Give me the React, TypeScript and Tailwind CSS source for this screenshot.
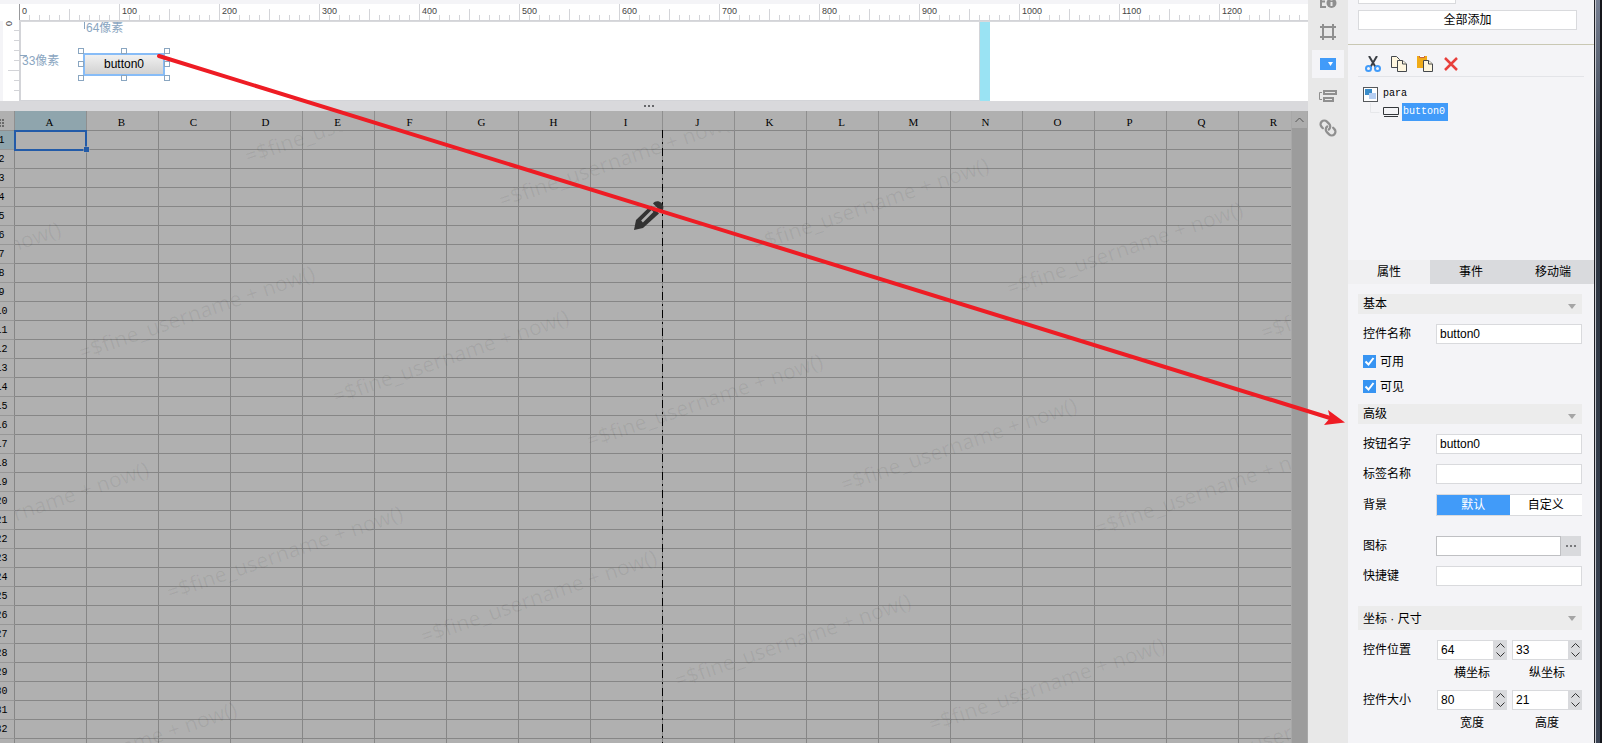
import { ReactNode, useState } from 'react'
import { Link } from 'lucide-react'

const COLUMNS = 'ABCDEFGHIJKLMNOPQR'.split('')
const ROWS = Array.from({ length: 33 }, (_, i) => i + 1)
const RULER_END = 1290
const TICKS = Array.from({ length: RULER_END / 10 }, (_, i) => i * 10)
const WATERMARK = '=$fine_username + now()'

// Watermark origins sit on a slanted lattice
const WATERMARKS = [-2, -1, 0, 1, 2, 3, 4, 5].flatMap((i) =>
  [-2, -1, 0, 1, 2, 3].map((j) => ({
    x: 248 + i * 254 + j * 88,
    y: 53 + i * 44 + j * 240,
  }))
)

function HorizontalRuler() {
  return (
    <svg width={RULER_END} height="17" className="block shrink-0" shapeRendering="crispEdges">
      <rect x="0" y="16" width={RULER_END} height="1" fill="#d3d4d8" />
      {TICKS.map((t) => {
        const top = t % 100 === 0 ? 0 : t % 50 === 0 ? 5 : 11
        return (
          <g key={t}>
            <rect x={t} y={top} width="1" height={16 - top} fill={t === 0 ? '#98999c' : '#d3d4d8'} />
            {t % 100 === 0 && (
              <text x={t + 3} y="10" fontSize="9" fill="#444" fontFamily="'Liberation Sans', sans-serif">
                {t}
              </text>
            )}
          </g>
        )
      })}
    </svg>
  )
}

function VerticalRuler() {
  return (
    <svg width="17" height="80" className="block shrink-0 bg-white" shapeRendering="crispEdges">
      <rect x="16" y="0" width="1" height="80" fill="#d3d4d8" />
      {[9, 19, 29, 39, 49, 59, 69].map((y) => (
        <rect key={y} x={y === 49 ? 5 : 11} y={y} width={y === 49 ? 11 : 5} height="1" fill="#d3d4d8" />
      ))}
      <text
        transform="translate(9 5) rotate(-90)"
        fontSize="9"
        fill="#444"
        fontFamily="'Liberation Sans', sans-serif"
      >
        0
      </text>
    </svg>
  )
}

const HANDLES = [
  'left-[-5px] top-[-5px]',
  'left-[38px] top-[-5px]',
  'right-[-5px] top-[-5px]',
  'left-[-5px] top-[8px]',
  'right-[-5px] top-[8px]',
  'left-[-5px] bottom-[-5px]',
  'left-[38px] bottom-[-5px]',
  'right-[-5px] bottom-[-5px]',
]

function ParameterCanvas() {
  return (
    <div className="relative h-20 flex-1 overflow-hidden border-t border-[#d8d9dc] bg-white">
      <div className="h-full w-[960px] border-b border-l border-r border-[#d3d4d8]" />
      <div className="absolute left-[960px] top-0 h-full w-[10px] bg-[#9ae3f3]" />

      <span className="absolute left-[64px] top-0 h-[7px] w-px bg-[#8aa6c1]" />
      <span className="absolute left-[66px] top-[-1px] text-[12px] leading-[14px] text-[#8aa6c1]">64像素</span>
      <span className="absolute left-0 top-[33px] h-px w-[7px] bg-[#8aa6c1]" />
      <span className="absolute left-[2px] top-[32px] text-[12px] leading-[14px] text-[#8aa6c1]">33像素</span>

      {/* Selected widget with its resize handles */}
      <div className="absolute left-[63px] top-[31px] h-[23px] w-[82px]">
        <button
          type="button"
          className="block h-full w-full border-2 border-[#87bcf7] bg-linear-to-b from-[#f0f0f0] to-[#d2d2d2] pb-px text-[12px] leading-[16px] text-black"
        >
          button0
        </button>
        {HANDLES.map((pos) => (
          <span key={pos} className={`absolute size-[6px] border border-[#8aa6c1] bg-white ${pos}`} />
        ))}
      </div>
    </div>
  )
}

function Sheet() {
  return (
    <div className="flex min-h-0 flex-1 overflow-hidden bg-[#b0b0b0]">
      <div className="relative min-w-0 flex-1 overflow-hidden">
        <table className="-ml-[11px] w-[1322px] table-fixed border-separate border-spacing-0 font-['Liberation_Mono',monospace] text-[10px] leading-[16px] text-black">
          <thead>
            <tr className="h-5">
              <th className="w-[26px] border-b border-r border-[#8f8f8f] p-0">
                <svg width="5" height="8" className="ml-[10px] mt-1" fill="#6a6a6a">
                  <path d="M0 0h2v2H0zM3 0h2v2H3zM0 3h2v2H0zM3 3h2v2H3zM0 6h2v2H0zM3 6h2v2H3z" />
                </svg>
              </th>
              {COLUMNS.map((c) => (
                <th
                  key={c}
                  className={`w-[72px] border-b border-r border-b-[#868686] border-r-[#8f8f8f] p-0 pr-[2px] pt-1 font-['Liberation_Serif',serif] text-[11px] leading-[15px] font-normal ${
                    c === 'A' ? 'bg-[#8fa5ad]' : ''
                  }`}
                >
                  {c}
                </th>
              ))}
            </tr>
          </thead>
          <tbody>
            {ROWS.map((r) => (
              <tr key={r} className="h-[19px]">
                <th
                  className={`border-b border-r border-b-[#979797] border-r-[#868686] p-0 pt-[2px] font-normal ${
                    r === 1 ? 'bg-[#8fa5ad]' : ''
                  }`}
                >
                  {r}
                </th>
                {COLUMNS.map((c) => (
                  <td key={c} className="border-b border-r border-[#868686] p-0" />
                ))}
              </tr>
            ))}
          </tbody>
        </table>

        <svg className="pointer-events-none absolute inset-0 h-full w-full">
          <defs>
            <clipPath id="cells">
              <rect x="15" y="20" width="2000" height="2000" />
            </clipPath>
          </defs>
          <g clipPath="url(#cells)">
            {WATERMARKS.map(({ x, y }) => (
              <text
                key={`${x}-${y}`}
                transform={`translate(${x} ${y}) rotate(-19)`}
                fontSize="21"
                fill="#000"
                fillOpacity="0.06"
                fontFamily="'Noto Sans', sans-serif"
              >
                {WATERMARK}
              </text>
            ))}
          </g>
          {/* Page break */}
          <path d="M662.5 19V2000" stroke="#000" strokeDasharray="8 4 2 4" />
          {/* Current cell */}
          <rect x="15" y="20" width="71" height="19" fill="none" stroke="#235ba8" strokeWidth="2" />
          <rect x="84" y="36" width="5" height="5" fill="#235ba8" stroke="#b0b0b0" strokeWidth="1" />
          <rect x="84" y="36" width="5" height="5" fill="#235ba8" />
          {/* Pencil */}
          <g fill="#333" transform="translate(634 90)">
            <path d="M0 29 2 19 17 4.500 25 12.500 9 27Z" />
            <path d="M19 2.500C21-.5 25-.5 27.500 2 30 4.500 30 8 27.500 11Z" />
            <path d="M8 20.500 18.500 10" stroke="#b0b0b0" strokeWidth="2.500" />
          </g>
        </svg>
      </div>

      <div className="flex w-[17px] shrink-0 flex-col border-x border-[#a8a8a8] bg-[#9c9c9c]">
        <button type="button" aria-label="Scroll up" className="flex h-[17px] items-center justify-center bg-[#adadad]">
          <svg width="9" height="6" fill="none" stroke="#555">
            <path d="M.5 5 4.500 1 8.500 5" />
          </svg>
        </button>
      </div>
    </div>
  )
}

function SideButton({ label, active, children }: { label: string; active?: boolean; children: ReactNode }) {
  return (
    <button
      type="button"
      aria-label={label}
      className={`flex h-7 w-8 shrink-0 items-center justify-center ${active ? 'bg-[#f4f4f7]' : ''}`}
    >
      {children}
    </button>
  )
}

function SideIcon({ children }: { children: ReactNode }) {
  return (
    <svg width="18" height="18" viewBox="0 0 18 18" fill="none" stroke="#8f8f8f">
      {children}
    </svg>
  )
}

function SideBar() {
  return (
    <nav className="-mt-[14px] flex w-10 shrink-0 flex-col items-center gap-1 bg-[#e8e8e8]">
      <SideButton label="Cell element">
        <SideIcon>
          <path d="M7 5H2v11h5M2 10.500h4" strokeWidth="2" />
          <circle cx="12.500" cy="12" r="5" fill="#8f8f8f" stroke="none" />
          <path d="M12.500 11v4M12.500 8v1.500" stroke="#e8e8e8" strokeWidth="2" />
        </SideIcon>
      </SideButton>
      <SideButton label="Floating element">
        <SideIcon>
          <path d="M4 1v16M14 1v16M1 4h16M1 14h16" strokeWidth="2" />
        </SideIcon>
      </SideButton>
      <SideButton label="Widget settings" active>
        <SideIcon>
          <rect x="1" y="3" width="16" height="12" fill="#419bf9" stroke="none" />
          <path d="M9 7h5l-2.500 4z" fill="#fff" stroke="none" />
        </SideIcon>
      </SideButton>
      <SideButton label="Condition attributes">
        <SideIcon>
          <path d="M3 5.500H.5v7H3" />
          <path d="M5 4h12v3H5zM5 11h9v3H5z" strokeWidth="2" />
        </SideIcon>
      </SideButton>
      <SideButton label="Hyperlink">
        <Link size={18} strokeWidth={3} color="#8f8f8f" className="rotate-90" />
      </SideButton>
    </nav>
  )
}

function SectionHeader({ title, tall }: { title: string; tall?: boolean }) {
  return (
    <button
      type="button"
      className={`flex w-full items-center justify-between bg-[#ececec] pl-[5px] pr-[6px] ${tall ? 'h-6 pt-px' : 'h-5'}`}
    >
      <span>{title}</span>
      <svg width="8" height="5" className={tall ? '' : 'mt-1'} fill="#a5a5a5">
        <path d="M0 0h8L4 5z" />
      </svg>
    </button>
  )
}

function Field({ id, label, children }: { id: string; label: string; children: ReactNode }) {
  return (
    <div className="flex items-center pl-[5px]">
      <label htmlFor={id} className="w-[73px] shrink-0">
        {label}
      </label>
      {children}
    </div>
  )
}

const INPUT = 'h-5 w-full min-w-0 border border-[#d9dadd] bg-white px-[3px] leading-[16px] outline-none'

function TextField({ id, label, value = '' }: { id: string; label: string; value?: string }) {
  return (
    <Field id={id} label={label}>
      <input id={id} type="text" defaultValue={value} className={INPUT} />
    </Field>
  )
}

function CheckField({ label }: { label: string }) {
  const [checked, setChecked] = useState(true)
  return (
    <label className="flex h-[15px] items-center gap-1 pl-[5px]">
      <span className="relative size-[13px]">
        <input
          type="checkbox"
          checked={checked}
          onChange={(e) => setChecked(e.target.checked)}
          className="block size-[13px] appearance-none border border-[#3794f2] checked:bg-[#3794f2]"
        />
        {checked && (
          <svg width="13" height="13" className="pointer-events-none absolute inset-0" fill="none" stroke="#fff" strokeWidth="2">
            <path d="M2.500 6.500 5.500 9.500 10.500 3" />
          </svg>
        )}
      </span>
      {label}
    </label>
  )
}

function Spinner({ label, value }: { label: string; value: number }) {
  return (
    <label className="flex flex-1 flex-col gap-[6px] text-center">
      <span className="flex h-5 bg-[#d9dadd]">
        <input
          type="text"
          defaultValue={value}
          className="w-full min-w-0 border border-[#d9dadd] bg-white px-[3px] leading-[16px] outline-none"
        />
        <span className="flex w-[13px] shrink-0 flex-col items-center justify-between py-[3px]">
          <svg width="9" height="5" fill="none" stroke="#333">
            <path d="M.5 4.500 4.500.5 8.500 4.500" />
          </svg>
          <svg width="9" height="5" fill="none" stroke="#333">
            <path d="M.5.5 4.500 4.500 8.500.5" />
          </svg>
        </span>
      </span>
      <span className="leading-[14px]">{label}</span>
    </label>
  )
}

function SpinnerRow({ title, first, second }: { title: string; first: [string, number]; second: [string, number] }) {
  return (
    <div className="flex pl-[5px]">
      <span className="w-[74px] shrink-0 leading-5">{title}</span>
      <div className="flex flex-1 gap-[5px]">
        <Spinner label={first[0]} value={first[1]} />
        <Spinner label={second[0]} value={second[1]} />
      </div>
    </div>
  )
}

function WidgetToolbar() {
  return (
    <div className="mx-[10px] mt-[10px] flex h-[22px] items-center gap-[10px] border-b border-[#e3e4e8] pb-[3px] pl-[7px]">
      <button type="button" aria-label="Cut">
        <svg width="16" height="16" fill="none">
          <path d="M4 0 10.500 11M12 0 5.500 11" stroke="#3b3f45" strokeWidth="2" />
          <circle cx="3.500" cy="12.500" r="2.500" stroke="#419bf9" strokeWidth="2" />
          <circle cx="12.500" cy="12.500" r="2.500" stroke="#419bf9" strokeWidth="2" />
        </svg>
      </button>
      <button type="button" aria-label="Copy">
        <svg width="16" height="16" fill="#fff7e0" stroke="#44484d">
          <path d="M.5.5h5L8.500 3.500v8H.5z" />
          <path d="M6.500 4.500h5L15.500 8v7.500h-9z" />
          <path d="M11.500 4.500V8h4" />
        </svg>
      </button>
      <button type="button" aria-label="Paste">
        <svg width="16" height="16" fill="#fff7e0">
          <path d="M0 0h10v12H0z" fill="#f0ab17" />
          <path d="M2.500 0v1.500h5V0" stroke="#c9653d" fill="#fff" />
          <path d="M6.500 4.500h5L15.500 8v7.500h-9z" stroke="#44484d" />
          <path d="M11.500 4.500V8h4" stroke="#44484d" />
        </svg>
      </button>
      <button type="button" aria-label="Delete">
        <svg width="16" height="16" fill="none" stroke="#e8403c" strokeWidth="2.500">
          <path d="M2 2 14 14M14 2 2 14" />
        </svg>
      </button>
    </div>
  )
}

function WidgetTree() {
  return (
    <ul className="h-[183px] pl-[15px] pt-[8px] font-['Liberation_Mono',monospace] text-[10px] leading-[18px]">
      <li className="flex h-[18px] items-center gap-[5px] text-black">
        <svg width="15" height="15">
          <rect x=".5" y=".5" width="14" height="14" fill="#fff" stroke="#55585c" />
          <rect x="2" y="2" width="7" height="6" fill="#3a8cc9" />
          <rect x="6" y="6" width="7" height="6" fill="#b5cef2" />
        </svg>
        para
      </li>
      <li className="flex items-center">
        <svg width="13" height="18" fill="none" stroke="#e6e7ea" className="ml-[7px]">
          <path d="M.5 0v9.500h9" />
        </svg>
        <svg width="16" height="11" fill="none" stroke="#33363a">
          <path d="M.5.5h15v7H.5zM1 9.500h14" />
        </svg>
        <span className="ml-[3px] bg-[#419bf9] pl-px pr-[3px] text-white">button0</span>
      </li>
    </ul>
  )
}

const TABS = ['属性', '事件', '移动端']

function PropertyPanel() {
  const [tab, setTab] = useState(TABS[0])
  return (
    <aside className="flex w-[246px] shrink-0 flex-col bg-[#f4f4f7]">
      <div className="ml-[10px] h-1 w-[98px] shrink-0 border-x border-b border-[#d9dadd] bg-white" />
      <button type="button" className="ml-[10px] mr-[17px] mt-[6px] h-5 shrink-0 border border-[#d9dadd] bg-white leading-[18px]">
        全部添加
      </button>
      <div className="mt-[14px] h-px shrink-0 bg-[#c9c8b4]" />
      <WidgetToolbar />
      <WidgetTree />

      <div role="tablist" className="flex h-6 shrink-0">
        {TABS.map((t) => (
          <button
            key={t}
            type="button"
            role="tab"
            aria-selected={t === tab}
            onClick={() => setTab(t)}
            className={`flex-1 ${t === tab ? 'bg-[#f0f0f2]' : 'bg-[#d9dadd]'}`}
          >
            {t}
          </button>
        ))}
      </div>

      <form className="flex flex-col gap-[10px] py-[10px] pl-[10px] pr-3">
        <SectionHeader title="基本" />
        <TextField id="widgetName" label="控件名称" value="button0" />
        <CheckField label="可用" />
        <CheckField label="可见" />

        <SectionHeader title="高级" />
        <TextField id="buttonText" label="按钮名字" value="button0" />
        <TextField id="labelName" label="标签名称" />
        <Field id="bgDefault" label="背景">
          <div className="flex h-[22px] w-full border-y border-l border-[#d9dadd] bg-white">
            <button id="bgDefault" type="button" className="flex-1 bg-[#419bf9] text-white">
              默认
            </button>
            <button type="button" className="flex-1">
              自定义
            </button>
          </div>
        </Field>
        <div className="mt-[10px]">
          <Field id="icon" label="图标">
            <input id="icon" type="text" className="h-5 w-full min-w-0 border border-[#bfc0c3] bg-white px-[3px] outline-none" />
            <button type="button" aria-label="Choose icon" className="mr-px flex h-5 w-5 shrink-0 items-center justify-center bg-[#d9dadd]">
              <svg width="10" height="2" fill="#77787b">
                <path d="M0 0h2v2H0zM4 0h2v2H4zM8 0h2v2H8z" />
              </svg>
            </button>
          </Field>
        </div>
        <TextField id="shortcut" label="快捷键" />

        <div className="mt-[10px]">
          <SectionHeader title="坐标 · 尺寸" tall />
        </div>
        <SpinnerRow title="控件位置" first={['横坐标', 64]} second={['纵坐标', 33]} />
        <SpinnerRow title="控件大小" first={['宽度', 80]} second={['高度', 21]} />
      </form>
    </aside>
  )
}

export default function App() {
  return (
    <div className="relative flex h-screen overflow-hidden bg-[#e8e8e8] font-['Liberation_Sans','Noto_Sans_CJK_SC',sans-serif] text-[12px] leading-[18px] text-black">
      <main className="flex min-w-0 flex-1 flex-col overflow-hidden bg-[#f4f4f7]">
        <div className="mt-1 flex shrink-0 overflow-hidden bg-white pl-[19px]">
          <HorizontalRuler />
        </div>
        <div className="flex shrink-0 pl-[3px]">
          <VerticalRuler />
          <ParameterCanvas />
        </div>
        <div className="flex h-[10px] shrink-0 items-center justify-center bg-[#d9d9dc] pr-[10px]">
          <svg width="10" height="2" fill="#66676a">
            <path d="M0 0h2v2H0zM4 0h2v2H4zM8 0h2v2H8z" />
          </svg>
        </div>
        <Sheet />
      </main>

      <SideBar />
      <PropertyPanel />

      {/* Window edge */}
      <div className="flex w-2 shrink-0 border-l border-[#1e2026] bg-[#c5c6cc] pl-px">
        <div className="w-1 bg-linear-to-b from-[#767f92] via-[#2c3440] via-25% to-[#3a4454]" />
        <div className="flex-1 bg-[#15171c]" />
      </div>

      {/* Pointer from the widget to its properties */}
      <svg className="pointer-events-none absolute left-0 top-0" width="1350" height="430">
        <path d="M159 56 1330 418" stroke="#ee1c24" strokeWidth="4" strokeLinecap="round" />
        <path d="M1345 422.500 1328 410 1330 418 1324 425Z" fill="#ee1c24" />
      </svg>
    </div>
  )
}
